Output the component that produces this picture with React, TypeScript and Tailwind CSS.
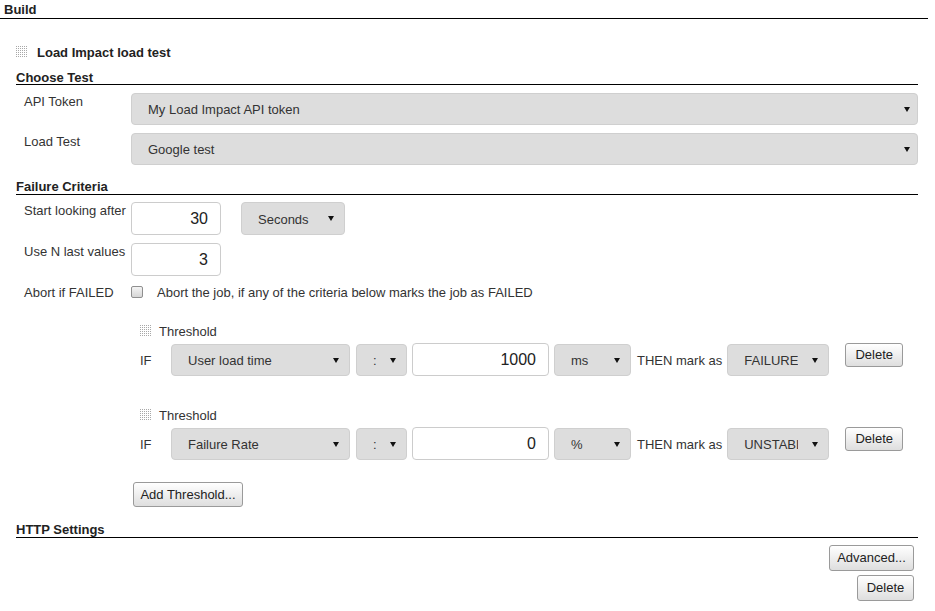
import React from 'react';

const Handle = () => (
  <svg width="12" height="12" viewBox="0 0 12 12" className="shrink-0">
    {Array.from({ length: 6 }).flatMap((_, r) =>
      Array.from({ length: 6 }).map((_, c) => (
        <rect key={`${r}-${c}`} x={c * 2} y={r * 2} width="1" height="1" fill="#a8a8a8" />
      ))
    )}
  </svg>
);

const Arrow = () => (
  <span className="inline-block w-0 h-0 shrink-0 border-l-[3px] border-r-[3px] border-t-[5px] border-l-transparent border-r-transparent border-t-[#111]" />
);

// the last option ("UNSTABLE") gets cut by the arrow, as the native select does
const Select: React.FC<{ value: string; className: string; pad?: string }> = ({ value, className, pad = 'pl-4 pr-[10px]' }) => (
  <div className={`flex items-center bg-[#dddddd] border border-[#cfcfcf] rounded-[4px] overflow-hidden whitespace-nowrap text-[#333] ${pad} ${className}`}>
    <span className="flex-1 min-w-0 overflow-hidden pt-[2px] mr-[14px]">{value}</span>
    <Arrow />
  </div>
);

const NumInput: React.FC<{ value: string; className: string }> = ({ value, className }) => (
  <input
    readOnly
    value={value}
    className={`bg-white border border-[#cccccc] rounded-[4px] text-right pr-3 pt-px text-[16px] text-[#222] outline-none ${className}`}
  />
);

const Button: React.FC<{ label: string; className: string }> = ({ label, className }) => (
  <button className={`flex items-center justify-center bg-linear-to-b from-white to-[#dedede] border border-[#9a9a9a] rounded-[3px] text-[13px] text-[#222] ${className}`}>
    {label}
  </button>
);

const Header: React.FC<{ title: string; className: string }> = ({ title, className }) => (
  <div className={`border-b border-black font-bold text-[#222] leading-[17px] ${className}`}>{title}</div>
);

const Row: React.FC<{ label: string; children: React.ReactNode }> = ({ label, children }) => (
  <div className="flex">
    <div className="w-[115px] pl-2 pt-px leading-4 shrink-0 whitespace-nowrap">{label}</div>
    {children}
  </div>
);

const Threshold: React.FC<{ metric: string; value: string; unit: string; result: string; className: string }> = ({ metric, value, unit, result, className }) => (
  <div className={`ml-[124px] ${className}`}>
    <div className="h-4 flex items-center gap-[7px]">
      <Handle />
      <span className="pt-px">Threshold</span>
    </div>
    <div className="mt-1 flex items-start">
      <span className="w-[31px] self-center pt-[2px]">IF</span>
      <Select value={metric} className="mt-px w-[179px] h-8" />
      <Select value=":" className="mt-px ml-[6px] w-[51px] h-8" />
      <NumInput value={value} className="ml-[5px] w-[137px] h-[33px]" />
      <Select value={unit} className="mt-px ml-[5px] w-[77px] h-8" />
      <span className="ml-[6px] self-center pt-[2px] whitespace-nowrap">THEN mark as</span>
      <Select value={result} className="mt-px ml-[5px] w-[102px] h-8" />
      <Button label="Delete" className="ml-4 w-[58px] h-6" />
    </div>
  </div>
);

export default function App() {
  return (
    <div className="w-[935px] h-[611px] bg-white overflow-hidden text-[13px] text-[#333] font-['Liberation_Sans',Arial,sans-serif]">
      <div className="w-[928px] h-[19px] border-b border-black px-1 pt-[2px] font-bold text-[#222] leading-[16px]">Build</div>
      <div className="pl-4 w-[918px]">
        <div className="mt-6 h-[18px] flex items-center gap-[9px] font-bold text-[#222]">
          <Handle />
          <span className="pt-[2px]">Load Impact load test</span>
        </div>

        <Header title="Choose Test" className="mt-2 h-4" />
        <div className="mt-2 flex flex-col gap-2">
          <Row label="API Token">
            <Select value="My Load Impact API token" className="w-[787px] h-8" pad="pl-4 pr-[7px]" />
          </Row>
          <Row label="Load Test">
            <Select value="Google test" className="w-[787px] h-8" pad="pl-4 pr-[7px]" />
          </Row>
        </div>

        <Header title="Failure Criteria" className="mt-[13px] h-[17px]" />
        <div className="mt-[7px] flex flex-col gap-2">
          <Row label="Start looking after">
            <NumInput value="30" className="w-[90px] h-[33px]" />
            <Select value="Seconds" className="ml-5 w-[104px] h-[33px]" />
          </Row>
          <Row label="Use N last values">
            <NumInput value="3" className="w-[90px] h-[33px]" />
          </Row>
          <div className="flex items-center h-4">
            <div className="w-[115px] pl-2 pt-px shrink-0">Abort if FAILED</div>
            <span className="w-3 h-3 border border-[#8f8f8f] rounded-[2px] bg-linear-to-b from-[#f4f4f4] to-[#d6d6d6]" />
            <span className="ml-[14px] pt-px">Abort the job, if any of the criteria below marks the job as FAILED</span>
          </div>
        </div>

        <Threshold metric="User load time" value="1000" unit="ms" result="FAILURE" className="mt-[23px]" />
        <Threshold metric="Failure Rate" value="0" unit="%" result="UNSTABLE" className="mt-[31px]" />

        <Button label="Add Threshold..." className="mt-[22px] ml-[117px] w-[110px] h-[25px]" />

        <Header title="HTTP Settings" className="mt-[14px] h-[17px]" />
        <div className="flex flex-col items-end pr-1">
          <Button label="Advanced..." className="mt-[7px] w-[85px] h-[26px]" />
          <Button label="Delete" className="mt-1 w-[57px] h-[26px]" />
        </div>
      </div>
    </div>
  );
}
